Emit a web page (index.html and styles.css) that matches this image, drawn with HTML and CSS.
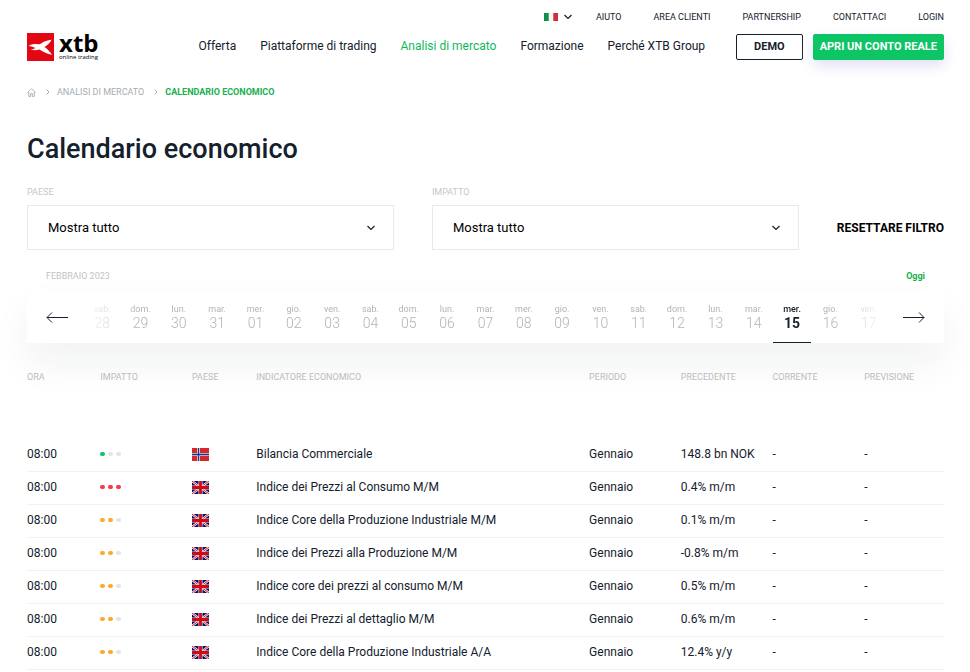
FILE: index.html
```html
<!DOCTYPE html>
<html lang="it">
<head>
<meta charset="utf-8">
<meta name="viewport" content="width=device-width, initial-scale=1">
<title>Calendario economico</title>
<link rel="stylesheet" href="styles.css">
</head>
<body>
<svg class="sprite" aria-hidden="true">
  <symbol id="chevron" viewBox="0 0 10 8"><path d="M1.500 2L5 5.500 8.500 2" fill="none" stroke="currentColor" stroke-width="1.200"/></symbol>
  <symbol id="crumb" viewBox="0 0 4 6"><path d="M.6.6L3 3 .6 5.400" fill="none" stroke="currentColor" stroke-width="1"/></symbol>
  <symbol id="uk" viewBox="0 0 17 13">
    <path fill="#0a1266" d="M0 0h17v13H0z"/>
    <path d="M0 0l17 13M17 0L0 13" stroke="#f1eef5" stroke-width="2.200"/>
    <path d="M0 0l17 13M17 0L0 13" stroke="#d4121e" stroke-width=".9"/>
    <path d="M8.500 0v13M0 6.500h17" stroke="#f3dfe4" stroke-width="4"/>
    <path d="M8.500 0v13M0 6.500h17" stroke="#cf0a16" stroke-width="2.800"/>
  </symbol>
  <symbol id="norway" viewBox="0 0 17 13">
    <path fill="#d72828" d="M0 0h17v13H0z"/>
    <path d="M6.500 0v13M0 6.500h17" stroke="#e9d5e0" stroke-width="3"/>
    <path d="M6.500 0v13M0 6.500h17" stroke="#0a3a94" stroke-width="1.300"/>
  </symbol>
</svg>
<div class="page">
  <header class="header">
    <a class="logo" href="#" aria-label="xtb online trading">
      <svg class="logo-mark" viewBox="0 0 27 28"><path fill="#e30613" d="M0 0h27v28H0z"/><path fill="#fff" d="M1.500 13C4 11 7 10.500 11 11.300c1 .1 2-.3 3-.9C17 8.500 20.500 7.500 24.500 6.800c-.8 2.400-3.500 5-7 7.200 2.800 2 5.500 4.500 7.500 7.800-5-.9-8.500-2.500-12.500-5.200-2.700.9-6 .9-8.800-.1 2-.3 3.600-.8 4.500-1.600-1.800-.9-4-1.600-6.700-1.900z"/></svg>
      <span class="logo-text"><b>xtb</b><small>online trading</small></span>
    </a>
    <div class="header-menus">
      <nav class="top-links" aria-label="Servizi">
        <button class="lang" type="button" aria-label="Italiano">
          <svg class="lang-flag" viewBox="0 0 14 8"><path fill="#f4f5f5" d="M0 0h14v8H0z"/><path fill="#0b9247" d="M0 0h4.700v8H0z"/><path fill="#d12d3c" d="M9.300 0H14v8H9.300z"/></svg>
          <svg class="chevron"><use href="#chevron"/></svg>
        </button>
        <a href="#">AIUTO</a><a href="#">AREA CLIENTI</a><a href="#">PARTNERSHIP</a><a href="#">CONTATTACI</a><a href="#">LOGIN</a>
      </nav>
      <div class="main-row">
        <nav class="main-nav" aria-label="Principale">
          <a href="#">Offerta</a><a href="#">Piattaforme di trading</a><a class="current" href="#">Analisi di mercato</a><a href="#">Formazione</a><a href="#">Perché XTB Group</a>
        </nav>
        <a class="button" href="#">DEMO</a>
        <a class="button primary" href="#">APRI UN CONTO REALE</a>
      </div>
    </div>
  </header>

  <nav class="breadcrumb" aria-label="Percorso">
    <a href="#" aria-label="Home"><svg class="home" viewBox="0 0 9 9"><path d="M.5 4.600l4-4 4 4M1.700 4v4.400h2V5.500h1.600v2.900h2V4" fill="none" stroke="currentColor" stroke-width=".9"/></svg></a>
    <svg class="crumb"><use href="#crumb"/></svg>
    <a href="#">ANALISI DI MERCATO</a>
    <svg class="crumb"><use href="#crumb"/></svg>
    <span class="here">CALENDARIO ECONOMICO</span>
  </nav>

  <main>
    <h1>Calendario economico</h1>
    <form class="filters">
      <div class="field">
        <label for="country">PAESE</label>
        <div class="select"><select id="country"><option>Mostra tutto</option></select><svg class="chevron"><use href="#chevron"/></svg></div>
      </div>
      <div class="field">
        <label for="impact">IMPATTO</label>
        <div class="select"><select id="impact"><option>Mostra tutto</option></select><svg class="chevron"><use href="#chevron"/></svg></div>
      </div>
      <button class="reset" type="reset">RESETTARE FILTRO</button>
    </form>

    <div class="month"><span>FEBBRAIO 2023</span><button type="button">Oggi</button></div>
    <div class="days">
      <button class="arrow" type="button" aria-label="Precedente"><svg viewBox="0 0 22 11"><path d="M22 5.500H1M6 .5l-5 5 5 5" fill="none" stroke="currentColor"/></svg></button>
      <div class="day-list">
        <button type="button">sab.<b>28</b></button><button type="button">dom.<b>29</b></button><button type="button">lun.<b>30</b></button><button type="button">mar.<b>31</b></button><button type="button">mer.<b>01</b></button><button type="button">gio.<b>02</b></button><button type="button">ven.<b>03</b></button><button type="button">sab.<b>04</b></button><button type="button">dom.<b>05</b></button><button type="button">lun.<b>06</b></button><button type="button">mar.<b>07</b></button><button type="button">mer.<b>08</b></button><button type="button">gio.<b>09</b></button><button type="button">ven.<b>10</b></button><button type="button">sab.<b>11</b></button><button type="button">dom.<b>12</b></button><button type="button">lun.<b>13</b></button><button type="button">mar.<b>14</b></button><button type="button" class="selected">mer.<b>15</b></button><button type="button">gio.<b>16</b></button><button type="button">ven.<b>17</b></button>
      </div>
      <button class="arrow" type="button" aria-label="Successivo"><svg viewBox="0 0 22 11"><path d="M0 5.500h21M16 .5l5 5-5 5" fill="none" stroke="currentColor"/></svg></button>
    </div>

    <table class="events">
      <colgroup><col class="c-time"><col class="c-impact"><col class="c-country"><col class="c-name"><col class="c-value"><col class="c-value"><col class="c-value"><col></colgroup>
      <thead><tr><th>ORA</th><th>IMPATTO</th><th>PAESE</th><th>INDICATORE ECONOMICO</th><th>PERIODO</th><th>PRECEDENTE</th><th>CORRENTE</th><th>PREVISIONE</th></tr></thead>
      <tbody>
        <tr><td>08:00</td><td><span class="dots low"><i></i><i></i><i></i></span></td><td><svg class="flag"><use href="#norway"/></svg></td><td>Bilancia Commerciale</td><td>Gennaio</td><td>148.8 bn NOK</td><td>-</td><td>-</td></tr>
        <tr><td>08:00</td><td><span class="dots high"><i></i><i></i><i></i></span></td><td><svg class="flag"><use href="#uk"/></svg></td><td>Indice dei Prezzi al Consumo M/M</td><td>Gennaio</td><td>0.4% m/m</td><td>-</td><td>-</td></tr>
        <tr><td>08:00</td><td><span class="dots medium"><i></i><i></i><i></i></span></td><td><svg class="flag"><use href="#uk"/></svg></td><td>Indice Core della Produzione Industriale M/M</td><td>Gennaio</td><td>0.1% m/m</td><td>-</td><td>-</td></tr>
        <tr><td>08:00</td><td><span class="dots medium"><i></i><i></i><i></i></span></td><td><svg class="flag"><use href="#uk"/></svg></td><td>Indice dei Prezzi alla Produzione M/M</td><td>Gennaio</td><td>-0.8% m/m</td><td>-</td><td>-</td></tr>
        <tr><td>08:00</td><td><span class="dots medium"><i></i><i></i><i></i></span></td><td><svg class="flag"><use href="#uk"/></svg></td><td>Indice core dei prezzi al consumo M/M</td><td>Gennaio</td><td>0.5% m/m</td><td>-</td><td>-</td></tr>
        <tr><td>08:00</td><td><span class="dots medium"><i></i><i></i><i></i></span></td><td><svg class="flag"><use href="#uk"/></svg></td><td>Indice dei Prezzi al dettaglio M/M</td><td>Gennaio</td><td>0.6% m/m</td><td>-</td><td>-</td></tr>
        <tr><td>08:00</td><td><span class="dots medium"><i></i><i></i><i></i></span></td><td><svg class="flag"><use href="#uk"/></svg></td><td>Indice Core della Produzione Industriale A/A</td><td>Gennaio</td><td>12.4% y/y</td><td>-</td><td>-</td></tr>
      </tbody>
    </table>
  </main>
</div>
</body>
</html>
```
FILE: styles.css
```css
* { box-sizing: border-box; }
body {
  margin: 0;
  background: #fff;
  color: #14202c;
  font-family: Roboto, "Liberation Sans", sans-serif;
  font-size: 12px;
  line-height: 16px;
}
a { color: inherit; text-decoration: none; }
button { border: 0; padding: 0; background: none; color: inherit; font: inherit; cursor: pointer; }
svg { display: block; }
.sprite { position: absolute; width: 0; height: 0; }
.page { padding: 9px 26px 0 27px; }
.chevron { width: 10px; height: 8px; }

.header { display: flex; justify-content: space-between; }
.logo { display: flex; gap: 5px; height: 28px; margin-top: 24px; color: #000; }
.logo-mark { width: 27px; height: 28px; }
.logo-text { display: flex; flex-direction: column; font-family: "Open Sans", sans-serif; }
.logo-text b { font-size: 24px; font-weight: 700; line-height: 20px; }
.logo-text small { font-size: 6px; line-height: 8px; }
.top-links { display: flex; justify-content: flex-end; gap: 32px; font-size: 9px; }
.lang { display: flex; align-items: center; gap: 5px; margin-right: -9px; }
.lang-flag { width: 14px; height: 8px; }
.main-row { display: flex; align-items: center; gap: 10px; margin-top: 9px; }
.main-nav { display: flex; gap: 24px; margin-right: 21px; padding-bottom: 2px; white-space: nowrap; }
.current { color: #0fb85c; }
.button {
  height: 26px;
  padding: 0 17px;
  border: 1px solid #14202c;
  border-radius: 2px;
  font-size: 11px;
  font-weight: 700;
  line-height: 24px;
  white-space: nowrap;
}
.primary { padding: 0 6px; border-color: #0dc565; background: #0dc565; color: #fff; box-shadow: 0 6px 14px #e0e1f5; }

.breadcrumb { display: flex; align-items: center; margin-top: 23px; color: #a8acb0; font-size: 9px; }
.home { width: 9px; height: 9px; }
.crumb { width: 4px; height: 6px; margin: 0 7px 0 10px; }
.here { color: #16b04d; font-weight: 700; }

h1 { margin: 29px 0 0; font-size: 27px; font-weight: 500; line-height: 40px; }
.filters { display: flex; align-items: flex-end; gap: 38px; margin-top: 15px; }
.field { flex: 1; font-size: 9px; color: #c5c8ca; }
.field label { display: block; margin-bottom: 5px; }
.select { position: relative; }
.select select {
  width: 100%;
  height: 45px;
  padding: 0 20px;
  border: 1px solid #e8e9ea;
  border-radius: 0;
  appearance: none;
  background: #fff;
  color: #000;
  font: 13px Roboto, sans-serif;
}
.select .chevron { position: absolute; top: 19px; right: 18px; color: #14202c; pointer-events: none; }
.reset { height: 45px; color: #000; font-size: 12px; font-weight: 700; }

.month { display: flex; justify-content: space-between; padding: 0 19px; margin-top: 18px; color: #c0c3c6; font-size: 9px; }
.month button { color: #16b04d; font-weight: 700; }
.days {
  display: flex;
  align-items: center;
  gap: 15px;
  height: 52px;
  margin-top: 7px;
  padding: 0 19px;
  background: #fff;
  box-shadow: 0 20px 40px rgba(20, 40, 40, .06);
}
.arrow svg { width: 22px; height: 11px; }
.day-list {
  display: flex;
  flex: 1;
  height: 52px;
  color: #b0b4b8;
  mask-image: linear-gradient(90deg, transparent, #000 7%, #000 93%, transparent);
}
.day-list button { flex: 1; border-bottom: 1px solid transparent; padding-top: 2px; font-size: 9px; line-height: 11px; }
.day-list b { display: block; font-size: 14px; font-weight: 300; line-height: 16px; }
.day-list .selected { border-color: #14202c; color: #14202c; font-weight: 500; }
.day-list .selected b { font-weight: 700; }

.events { width: 100%; table-layout: fixed; border-collapse: separate; border-spacing: 0; }
.c-time { width: 8%; }
.c-impact, .c-value { width: 10%; }
.c-country { width: 7%; }
.c-name { width: 36.300%; }
.events th { height: 96px; padding: 26px 0 0; color: #b9bdc0; font-size: 9px; font-weight: 400; text-align: left; vertical-align: top; }
.events td { height: 33px; padding: 0 0 2px; border-bottom: 1px solid #f0f1f2; white-space: nowrap; }
.dots { display: flex; gap: 3px; }
.dots i { width: 5px; height: 4px; border-radius: 2px; background: #e3e4e5; }
.low i:first-child { background: #0dc565; }
.medium i:not(:last-child) { background: #fda92f; }
.high i { background: #fb3448; }
.flag { width: 17px; height: 13px; }
```
